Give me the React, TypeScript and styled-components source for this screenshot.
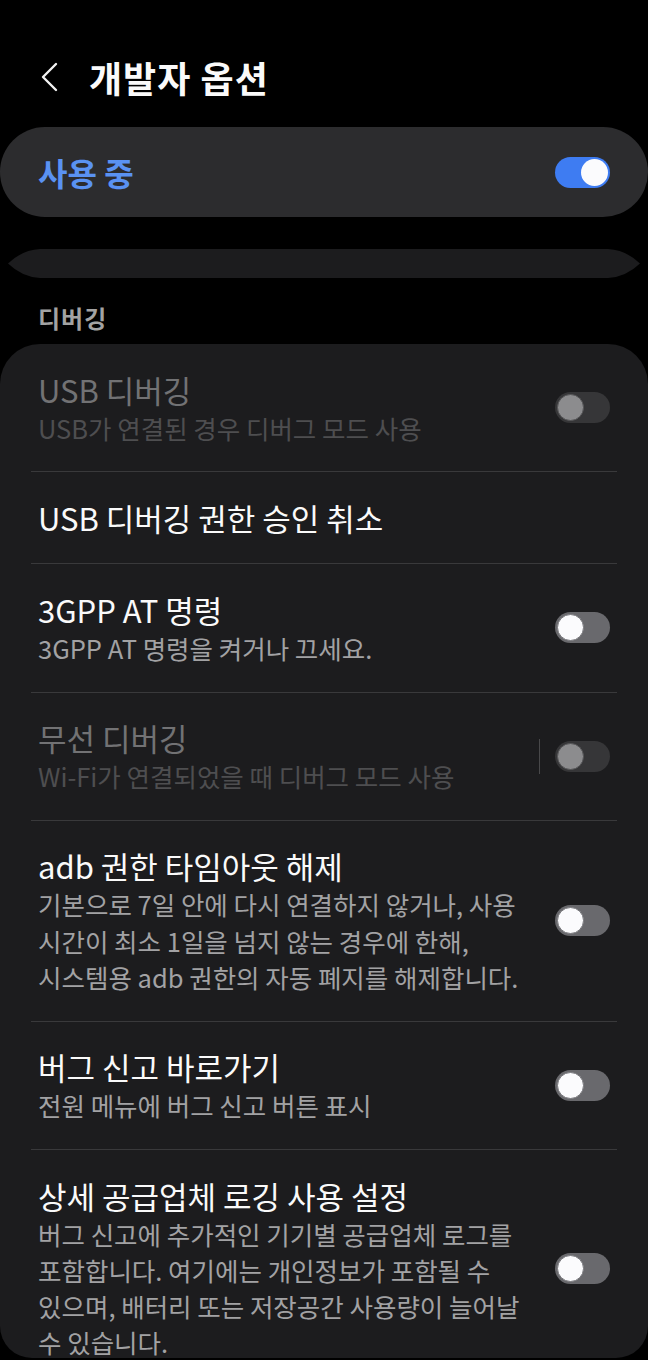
import React from "react";
import styled, { createGlobalStyle } from "styled-components";

const GlobalStyle = createGlobalStyle`
  html, body {
    margin: 0;
    padding: 0;
    background: #000;
  }
  body {
    font-family: "Noto Sans CJK KR", "Noto Sans", sans-serif;
    -webkit-font-smoothing: antialiased;
  }
`;

const Page = styled.div`
  width: 648px;
  height: 1360px;
  background: #000;
  display: flex;
  flex-direction: column;
  overflow: hidden;
`;

const Header = styled.header`
  height: 50px;
  margin: 52px 0 25px;
  padding-left: 38px;
  display: flex;
  align-items: center;
  gap: 27px;
`;

const BackButton = styled.button`
  width: 24px;
  height: 32px;
  padding: 0;
  border: none;
  background: none;
  display: flex;
  align-items: center;
  justify-content: center;
`;

const Title = styled.h1`
  margin: 0;
  font-size: 36px;
  line-height: 44px;
  font-weight: 700;
  color: #fafafa;
  letter-spacing: 1px;
`;

const MasterCard = styled.div`
  height: 90px;
  border-radius: 45px;
  background: #2c2c2e;
  padding: 0 38px;
  display: flex;
  align-items: center;
  justify-content: space-between;
  flex-shrink: 0;
`;

const MasterLabel = styled.span`
  font-size: 32px;
  font-weight: 700;
  color: #5a92f2;
  line-height: 40px;
`;

const Strip = styled.div`
  height: 29px;
  margin: 32px 8px 0;
  background: #1c1c1e;
  flex-shrink: 0;
  clip-path: path("M 32 0 H 600 Q 618 1 632 14.5 Q 618 28 600 29 H 32 Q 14 28 0 14.5 Q 14 1 32 0 Z");
`;

const SectionLabel = styled.div`
  margin: 25px 0 11px;
  padding-left: 38px;
  height: 30px;
  line-height: 30px;
  font-size: 24px;
  font-weight: 700;
  color: #a3a3a3;
  letter-spacing: 1px;
  flex-shrink: 0;
`;

const MainCard = styled.section`
  flex: 1;
  min-height: 0;
  margin-bottom: 2px;
  background: #1c1c1e;
  border-radius: 40px 40px 32px 32px;
  overflow: hidden;
  display: flex;
  flex-direction: column;
`;

const Row = styled.div`
  display: flex;
  align-items: center;
  padding: 25.5px 38px;
  flex-shrink: 0;
`;

const TextCol = styled.div`
  flex: 0 1 496px;
  min-width: 0;
  word-break: keep-all;
`;

const RowTitle = styled.div<{ $disabled?: boolean }>`
  font-size: 31px;
  line-height: 40px;
  font-weight: 400;
  color: ${(p) => (p.$disabled ? "#727274" : "#fafafa")};
`;

const RowSub = styled.div<{ $disabled?: boolean }>`
  font-size: 25.5px;
  line-height: 36.3px;
  font-weight: 400;
  color: ${(p) => (p.$disabled ? "#4e4e50" : "#a2a2a4")};
`;

const Divider = styled.div`
  height: 1px;
  margin: 0 31px;
  background: #39393b;
  flex-shrink: 0;
`;

const VDivider = styled.div`
  width: 1px;
  height: 35px;
  background: #48484a;
  margin: 0 0 0 auto;
  flex-shrink: 0;
`;

const Spacer = styled.div`
  flex: 1 1 0;
`;

const Track = styled.div<{ $on?: boolean; $disabled?: boolean }>`
  width: 55px;
  height: 31px;
  border-radius: 16px;
  box-sizing: border-box;
  padding: 2px;
  flex-shrink: 0;
  display: flex;
  align-items: center;
  justify-content: ${(p) => (p.$on ? "flex-end" : "flex-start")};
  background: ${(p) =>
    p.$on ? "#3e7cf2" : p.$disabled ? "#363638" : "#69696d"};
  margin-left: 15px;
`;

const Thumb = styled.div<{ $disabled?: boolean }>`
  width: 27px;
  height: 27px;
  border-radius: 50%;
  box-sizing: border-box;
  background: ${(p) => (p.$disabled ? "#8c8c8e" : "#fbfbfd")};
  border: 1.5px solid ${(p) => (p.$disabled ? "#555557" : "#7a7a7e")};
`;

const OnThumb = styled(Thumb)`
  border: none;
`;

type ToggleProps = { on?: boolean; disabled?: boolean };

const Toggle = ({ on, disabled }: ToggleProps) => (
  <Track $on={on} $disabled={disabled}>
    {on ? <OnThumb /> : <Thumb $disabled={disabled} />}
  </Track>
);

type Item = {
  title: string;
  sub?: string;
  disabled?: boolean;
  toggle?: boolean;
  split?: boolean;
};

const items: Item[] = [
  {
    title: "USB 디버깅",
    sub: "USB가 연결된 경우 디버그 모드 사용",
    disabled: true,
    toggle: true,
  },
  { title: "USB 디버깅 권한 승인 취소" },
  { title: "3GPP AT 명령", sub: "3GPP AT 명령을 켜거나 끄세요.", toggle: true },
  {
    title: "무선 디버깅",
    sub: "Wi-Fi가 연결되었을 때 디버그 모드 사용",
    disabled: true,
    toggle: true,
    split: true,
  },
  {
    title: "adb 권한 타임아웃 해제",
    sub: "기본으로 7일 안에 다시 연결하지 않거나, 사용 시간이 최소 1일을 넘지 않는 경우에 한해, 시스템용 adb 권한의 자동 폐지를 해제합니다.",
    toggle: true,
  },
  { title: "버그 신고 바로가기", sub: "전원 메뉴에 버그 신고 버튼 표시", toggle: true },
  {
    title: "상세 공급업체 로깅 사용 설정",
    sub: "버그 신고에 추가적인 기기별 공급업체 로그를 포함합니다. 여기에는 개인정보가 포함될 수 있으며, 배터리 또는 저장공간 사용량이 늘어날 수 있습니다.",
    toggle: true,
  },
];

export default function App() {
  return (
    <>
      <GlobalStyle />
      <Page>
        <Header>
          <BackButton aria-label="뒤로">
            <svg width="20" height="30" viewBox="0 0 20 30" fill="none">
              <path
                d="M16 2 L3 15 L16 28"
                stroke="#f2f2f2"
                strokeWidth="2.4"
                strokeLinecap="round"
                strokeLinejoin="round"
              />
            </svg>
          </BackButton>
          <Title>개발자 옵션</Title>
        </Header>

        <MasterCard>
          <MasterLabel>사용 중</MasterLabel>
          <Toggle on />
        </MasterCard>

        <Strip />

        <SectionLabel>디버깅</SectionLabel>

        <MainCard>
          {items.map((it, i) => (
            <React.Fragment key={it.title}>
              {i > 0 && <Divider />}
              <Row>
                <TextCol>
                  <RowTitle $disabled={it.disabled}>{it.title}</RowTitle>
                  {it.sub && <RowSub $disabled={it.disabled}>{it.sub}</RowSub>}
                </TextCol>
                {it.split ? <VDivider /> : <Spacer />}
                {it.toggle && <Toggle disabled={it.disabled} />}
              </Row>
            </React.Fragment>
          ))}
        </MainCard>
      </Page>
    </>
  );
}
